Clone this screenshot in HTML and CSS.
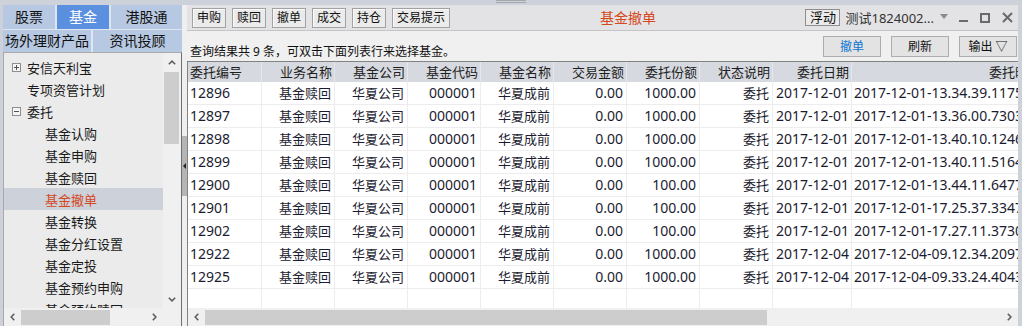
FILE: index.html
```html
<!DOCTYPE html>
<html>
<head>
<meta charset="utf-8">
<title>基金撤单</title>
<link rel="stylesheet" href="styles.css">
</head>
<body>
<div class="app">
  <div class="topstrip"><span class="grip"></span></div>
  <div class="main">
    <aside class="left">
      <div class="tabs row1">
        <div class="tab tab-s">股票</div>
        <div class="tab tab-s active">基金</div>
        <div class="tab tab-last">港股通</div>
      </div>
      <div class="tabs row2">
        <div class="tab tab-w">场外理财产品</div>
        <div class="tab tab-last">资讯投顾</div>
      </div>
      <div class="tree">
        <div class="tree-body">
          <div class="tree-list">
            <div class="node"><span class="box plus"></span>安信天利宝</div>
            <div class="node leaf0">专项资管计划</div>
            <div class="node"><span class="box minus"></span>委托</div>
            <div class="node child">基金认购</div>
            <div class="node child">基金申购</div>
            <div class="node child">基金赎回</div>
            <div class="node child selected">基金撤单</div>
            <div class="node child">基金转换</div>
            <div class="node child">基金分红设置</div>
            <div class="node child">基金定投</div>
            <div class="node child">基金预约申购</div>
            <div class="node child">基金预约赎回</div>
          </div>
          <div class="vscroll">
            <div class="sb-btn"><svg width="8" height="5" viewBox="0 0 8 5"><polyline points="0.8,4.3 4,1.2 7.2,4.3" class="chev"/></svg></div>
            <div class="vthumb"></div>
            <div class="sb-space"></div>
            <div class="sb-btn"><svg width="8" height="5" viewBox="0 0 8 5"><polyline points="0.8,0.8 4,3.9 7.2,0.8" class="chev"/></svg></div>
          </div>
        </div>
        <div class="tree-hbar">
          <div class="hscroll tree-htrack">
            <div class="sb-btn-h"><svg width="5" height="8" viewBox="0 0 5 8"><polyline points="4.3,0.8 1.2,4 4.3,7.2" class="chev"/></svg></div>
            <div class="hthumb tree-hthumb"></div>
            <div class="sb-space"></div>
            <div class="sb-btn-h"><svg width="5" height="8" viewBox="0 0 5 8"><polyline points="0.8,0.8 3.9,4 0.8,7.2" class="chev"/></svg></div>
          </div>
          <div class="corner"></div>
        </div>
      </div>
    </aside>

    <div class="splitter"><div class="split-thumb"><span class="tri"></span></div></div>

    <section class="right">
      <div class="toolbar">
        <div class="tb-group">
          <button class="tb-btn">申购</button>
          <button class="tb-btn">赎回</button>
          <button class="tb-btn">撤单</button>
          <button class="tb-btn">成交</button>
          <button class="tb-btn">持仓</button>
          <button class="tb-btn">交易提示</button>
        </div>
        <div class="title">基金撤单</div>
        <div class="tb-right">
          <button class="float-btn">浮动</button>
          <span class="account">测试1824002...</span>
          <span class="dd-arrow"></span>
          <span class="ctrl first"><span class="ico-min"></span></span>
          <span class="ctrl"><span class="ico-max"></span></span>
          <span class="ctrl"><svg width="11" height="11" viewBox="0 0 11 11"><path d="M1 1L10 10M10 1L1 10" class="x-ico"/></svg></span>
        </div>
      </div>

      <div class="content">
        <div class="actions">
          <div class="info">查询结果共 9 条，可双击下面列表行来选择基金。</div>
          <div class="act-btns">
            <button class="act-btn primary">撤单</button>
            <button class="act-btn">刷新</button>
            <button class="act-btn">输出 ▽</button>
          </div>
        </div>

        <div class="grid">
          <div class="grid-view">
            <div class="tr head">
              <div class="th l">委托编号</div>
              <div class="th">业务名称</div>
              <div class="th">基金公司</div>
              <div class="th">基金代码</div>
              <div class="th">基金名称</div>
              <div class="th">交易金额</div>
              <div class="th">委托份额</div>
              <div class="th">状态说明</div>
              <div class="th">委托日期</div>
              <div class="th">委托时间</div>
            </div>
            <div class="tr"><div class="td num l">12896</div><div class="td">基金赎回</div><div class="td">华夏公司</div><div class="td num">000001</div><div class="td">华夏成前</div><div class="td num">0.00</div><div class="td num">1000.00</div><div class="td">委托</div><div class="td num">2017-12-01</div><div class="td num l">2017-12-01-13.34.39.117500</div></div>
            <div class="tr"><div class="td num l">12897</div><div class="td">基金赎回</div><div class="td">华夏公司</div><div class="td num">000001</div><div class="td">华夏成前</div><div class="td num">0.00</div><div class="td num">1000.00</div><div class="td">委托</div><div class="td num">2017-12-01</div><div class="td num l">2017-12-01-13.36.00.730300</div></div>
            <div class="tr"><div class="td num l">12898</div><div class="td">基金赎回</div><div class="td">华夏公司</div><div class="td num">000001</div><div class="td">华夏成前</div><div class="td num">0.00</div><div class="td num">1000.00</div><div class="td">委托</div><div class="td num">2017-12-01</div><div class="td num l">2017-12-01-13.40.10.124600</div></div>
            <div class="tr"><div class="td num l">12899</div><div class="td">基金赎回</div><div class="td">华夏公司</div><div class="td num">000001</div><div class="td">华夏成前</div><div class="td num">0.00</div><div class="td num">1000.00</div><div class="td">委托</div><div class="td num">2017-12-01</div><div class="td num l">2017-12-01-13.40.11.516400</div></div>
            <div class="tr"><div class="td num l">12900</div><div class="td">基金赎回</div><div class="td">华夏公司</div><div class="td num">000001</div><div class="td">华夏成前</div><div class="td num">0.00</div><div class="td num">100.00</div><div class="td">委托</div><div class="td num">2017-12-01</div><div class="td num l">2017-12-01-13.44.11.647700</div></div>
            <div class="tr"><div class="td num l">12901</div><div class="td">基金赎回</div><div class="td">华夏公司</div><div class="td num">000001</div><div class="td">华夏成前</div><div class="td num">0.00</div><div class="td num">100.00</div><div class="td">委托</div><div class="td num">2017-12-01</div><div class="td num l">2017-12-01-17.25.37.334700</div></div>
            <div class="tr"><div class="td num l">12902</div><div class="td">基金赎回</div><div class="td">华夏公司</div><div class="td num">000001</div><div class="td">华夏成前</div><div class="td num">0.00</div><div class="td num">100.00</div><div class="td">委托</div><div class="td num">2017-12-01</div><div class="td num l">2017-12-01-17.27.11.373000</div></div>
            <div class="tr"><div class="td num l">12922</div><div class="td">基金赎回</div><div class="td">华夏公司</div><div class="td num">000001</div><div class="td">华夏成前</div><div class="td num">0.00</div><div class="td num">1000.00</div><div class="td">委托</div><div class="td num">2017-12-04</div><div class="td num l">2017-12-04-09.12.34.209700</div></div>
            <div class="tr"><div class="td num l">12925</div><div class="td">基金赎回</div><div class="td">华夏公司</div><div class="td num">000001</div><div class="td">华夏成前</div><div class="td num">0.00</div><div class="td num">1000.00</div><div class="td">委托</div><div class="td num">2017-12-04</div><div class="td num l">2017-12-04-09.33.24.404300</div></div>
            <div class="tr filler"><div class="td"></div><div class="td"></div><div class="td"></div><div class="td"></div><div class="td"></div><div class="td"></div><div class="td"></div><div class="td"></div><div class="td"></div><div class="td"></div></div>
          </div>
          <div class="hscroll grid-htrack">
            <div class="sb-btn-h"><svg width="5" height="8" viewBox="0 0 5 8"><polyline points="4.3,0.8 1.2,4 4.3,7.2" class="chev"/></svg></div>
            <div class="hthumb grid-hthumb"></div>
            <div class="sb-space"></div>
            <div class="sb-btn-h"><svg width="5" height="8" viewBox="0 0 5 8"><polyline points="0.8,0.8 3.9,4 0.8,7.2" class="chev"/></svg></div>
          </div>
        </div>
      </div>
    </section>
  </div>
</div>
</body>
</html>
```

FILE: styles.css
```css
* { box-sizing: border-box; }
html, body { margin: 0; padding: 0; }
body {
  width: 1022px;
  height: 326px;
  overflow: hidden;
  background: #cdd1d9;
  font-family: "Noto Sans", "Noto Sans CJK SC", sans-serif;
  font-size: 13px;
  color: #1a1a1a;
}
button { font-family: inherit; color: inherit; cursor: default; }

.app { display: flex; flex-direction: column; height: 326px; }
.topstrip { height: 5px; display: flex; flex: none; }
.grip {
  margin-left: 496px;
  width: 30px;
  height: 3px;
  border-top: 1px solid #a3a7ae;
  border-bottom: 1px solid #a3a7ae;
}
.main { flex: 1; display: flex; padding: 0 4px 0 3px; min-height: 0; }

/* ---------- left panel ---------- */
.left { width: 179px; flex: none; display: flex; flex-direction: column; }
.tabs { display: flex; flex: none; }
.row1 { height: 25px; border-bottom: 1px solid #dfe6f1; }
.row2 { height: 22px; }
.tab {
  display: flex;
  align-items: center;
  justify-content: center;
  background: #b7c8e2;
  border-right: 2px solid #dfe6f1;
  font-size: 14px;
  color: #111;
  line-height: 1;
}
.tab-s { width: 54px; }
.tab-w { width: 90px; }
.tab-last { flex: 1; border-right: 0; }
.tab.active { background: #5b8fdf; color: #fff; }

.tree {
  flex: 1;
  display: flex;
  flex-direction: column;
  min-height: 0;
  border-top: 1px solid #a9a9a9;
  border-left: 1px solid #a9a9a9;
  border-right: 1px solid #6f6f6f;
}
.tree-body { flex: 1; display: flex; min-height: 0; }
.tree-list { flex: 1; background: #ebebeb; padding-top: 3px; overflow: hidden; }
.node {
  height: 22px;
  display: flex;
  align-items: center;
  padding-left: 8px;
  white-space: nowrap;
  font-size: 13px;
  color: #1a1a1a;
}
.node.leaf0 { padding-left: 23px; }
.node.child { padding-left: 41px; }
.node.selected { background: #cdd1da; color: #d4481c; }
.box {
  position: relative;
  width: 9px;
  height: 9px;
  border: 1px solid #8e8e8e;
  background: #f4f4f4;
  margin-right: 6px;
  flex: none;
}
.box::before {
  content: "";
  position: absolute;
  left: 1px; top: 3px;
  width: 5px; height: 1px;
  background: #555;
}
.box.plus::after {
  content: "";
  position: absolute;
  left: 3px; top: 1px;
  width: 1px; height: 5px;
  background: #555;
}

.vscroll { width: 18px; flex: none; background: #f0f0f0; display: flex; flex-direction: column; }
.sb-btn { height: 18px; flex: none; display: flex; align-items: center; justify-content: center; }
.vthumb { height: 72px; margin: 1px 2px 0 1px; background: #cdcdcd; flex: none; }
.sb-space { flex: 1; }
.chev { fill: none; stroke: #5f5f5f; stroke-width: 1.6; }

.tree-hbar { height: 18px; flex: none; display: flex; background: #f0f0f0; }
.hscroll { display: flex; align-items: stretch; background: #f0f0f0; }
.tree-htrack { width: 159px; }
.corner { flex: 1; }
.sb-btn-h { width: 17px; flex: none; display: flex; align-items: center; justify-content: center; }
.hthumb { background: #cdcdcd; margin: 2px 0 1px; flex: none; }
.tree-hthumb { width: 89px; }

/* ---------- splitter ---------- */
.splitter { width: 5px; flex: none; background: #efefef; display: flex; align-items: center; }
.split-thumb {
  width: 5px;
  height: 60px;
  background: #b5b5b5;
  display: flex;
  align-items: center;
  justify-content: center;
}
.tri {
  width: 0; height: 0;
  border-top: 3px solid transparent;
  border-bottom: 3px solid transparent;
  border-right: 3px solid #222;
}

/* ---------- right panel ---------- */
.right { flex: 1; display: flex; flex-direction: column; min-width: 0; }
.toolbar {
  height: 26px;
  flex: none;
  background: #e3e3e5;
  border-bottom: 1px solid #c4c4c6;
  display: flex;
  align-items: center;
  padding-left: 5px;
}
.tb-group { display: flex; gap: 6px; }
.tb-btn {
  height: 20px;
  padding: 0 4px;
  font-size: 12px;
  line-height: 18px;
  background: #ebebeb;
  border: 1px solid #a2a2a2;
  box-shadow: inset 1px 1px 0 #fafafa;
  color: #111;
}
.title { margin-left: 150px; font-size: 14px; color: #d4481c; line-height: 1; }
.tb-right { margin-left: auto; display: flex; align-items: center; height: 100%; }
.float-btn {
  height: 17px;
  width: 35px;
  padding: 0;
  font-size: 13px;
  line-height: 15px;
  background: #ebebeb;
  border: 1px solid #8e8e8e;
  color: #111;
}
.account {
  margin-left: 5px;
  margin-right: 6px;
  font-size: 13px;
  color: #333;
  white-space: nowrap;
}
.dd-arrow {
  width: 0; height: 0;
  border-left: 4px solid transparent;
  border-right: 4px solid transparent;
  border-top: 5px solid #8a8a8a;
  margin-top: -2px;
}
.ctrl {
  width: 22px;
  height: 20px;
  display: flex;
  align-items: center;
  justify-content: center;
}
.ctrl.first { margin-left: 4px; }
.ico-min { width: 9px; height: 2px; background: #6a6a6a; margin-top: 6px; }
.ico-max { width: 10px; height: 10px; border: 2px solid #6a6a6a; }
.x-ico { stroke: #6a6a6a; stroke-width: 2; fill: none; }

.content { flex: 1; display: flex; flex-direction: column; background: #f0f0f0; min-height: 0; }
.actions { height: 30px; flex: none; display: flex; padding-left: 3px; }
.info { align-self: flex-end; font-size: 12px; line-height: 16px; margin-bottom: 1px; color: #111; white-space: nowrap; }
.act-btns { margin-left: auto; display: flex; gap: 10px; padding-top: 5px; padding-right: 1px; }
.act-btn {
  width: 58px;
  height: 21px;
  padding: 0;
  font-size: 12px;
  line-height: 19px;
  background: #e3e3e3;
  border: 1px solid #adadad;
  color: #111;
}
.act-btn.primary { color: #0b74d6; }

.grid {
  flex: 1;
  display: flex;
  flex-direction: column;
  min-height: 0;
  border-top: 1px solid #828282;
  border-left: 1px solid #828282;
}
.grid-view { flex: 1; display: flex; flex-direction: column; overflow: hidden; background: #fff; min-height: 0; }
.tr {
  display: grid;
  grid-template-columns: 74px 73px 73px 73px 73px 73px 73px 73px 79px 192px;
  height: 23px;
  flex: none;
}
.tr.head { height: 20px; background: #d6d9df; }
.tr.filler { flex: 1; height: auto; }
.th {
  padding: 0 2px;
  text-align: right;
  font-size: 13px;
  line-height: 20px;
  white-space: nowrap;
  overflow: hidden;
  color: #1e1e1e;
  border-right: 1px solid #e6e7ea;
}
.td {
  padding: 0 3px;
  text-align: right;
  font-size: 13px;
  line-height: 22px;
  white-space: nowrap;
  overflow: hidden;
  color: #1c1c30;
  border-right: 1px solid #ededed;
  border-bottom: 1px solid #ededed;
}
.filler .td { border-bottom: 0; }
.th.l, .td.l { text-align: left; padding-left: 2px; }
.num { font-size: 14px; }

.grid-htrack { height: 18px; flex: none; }
.grid-hthumb { width: 562px; }
```
